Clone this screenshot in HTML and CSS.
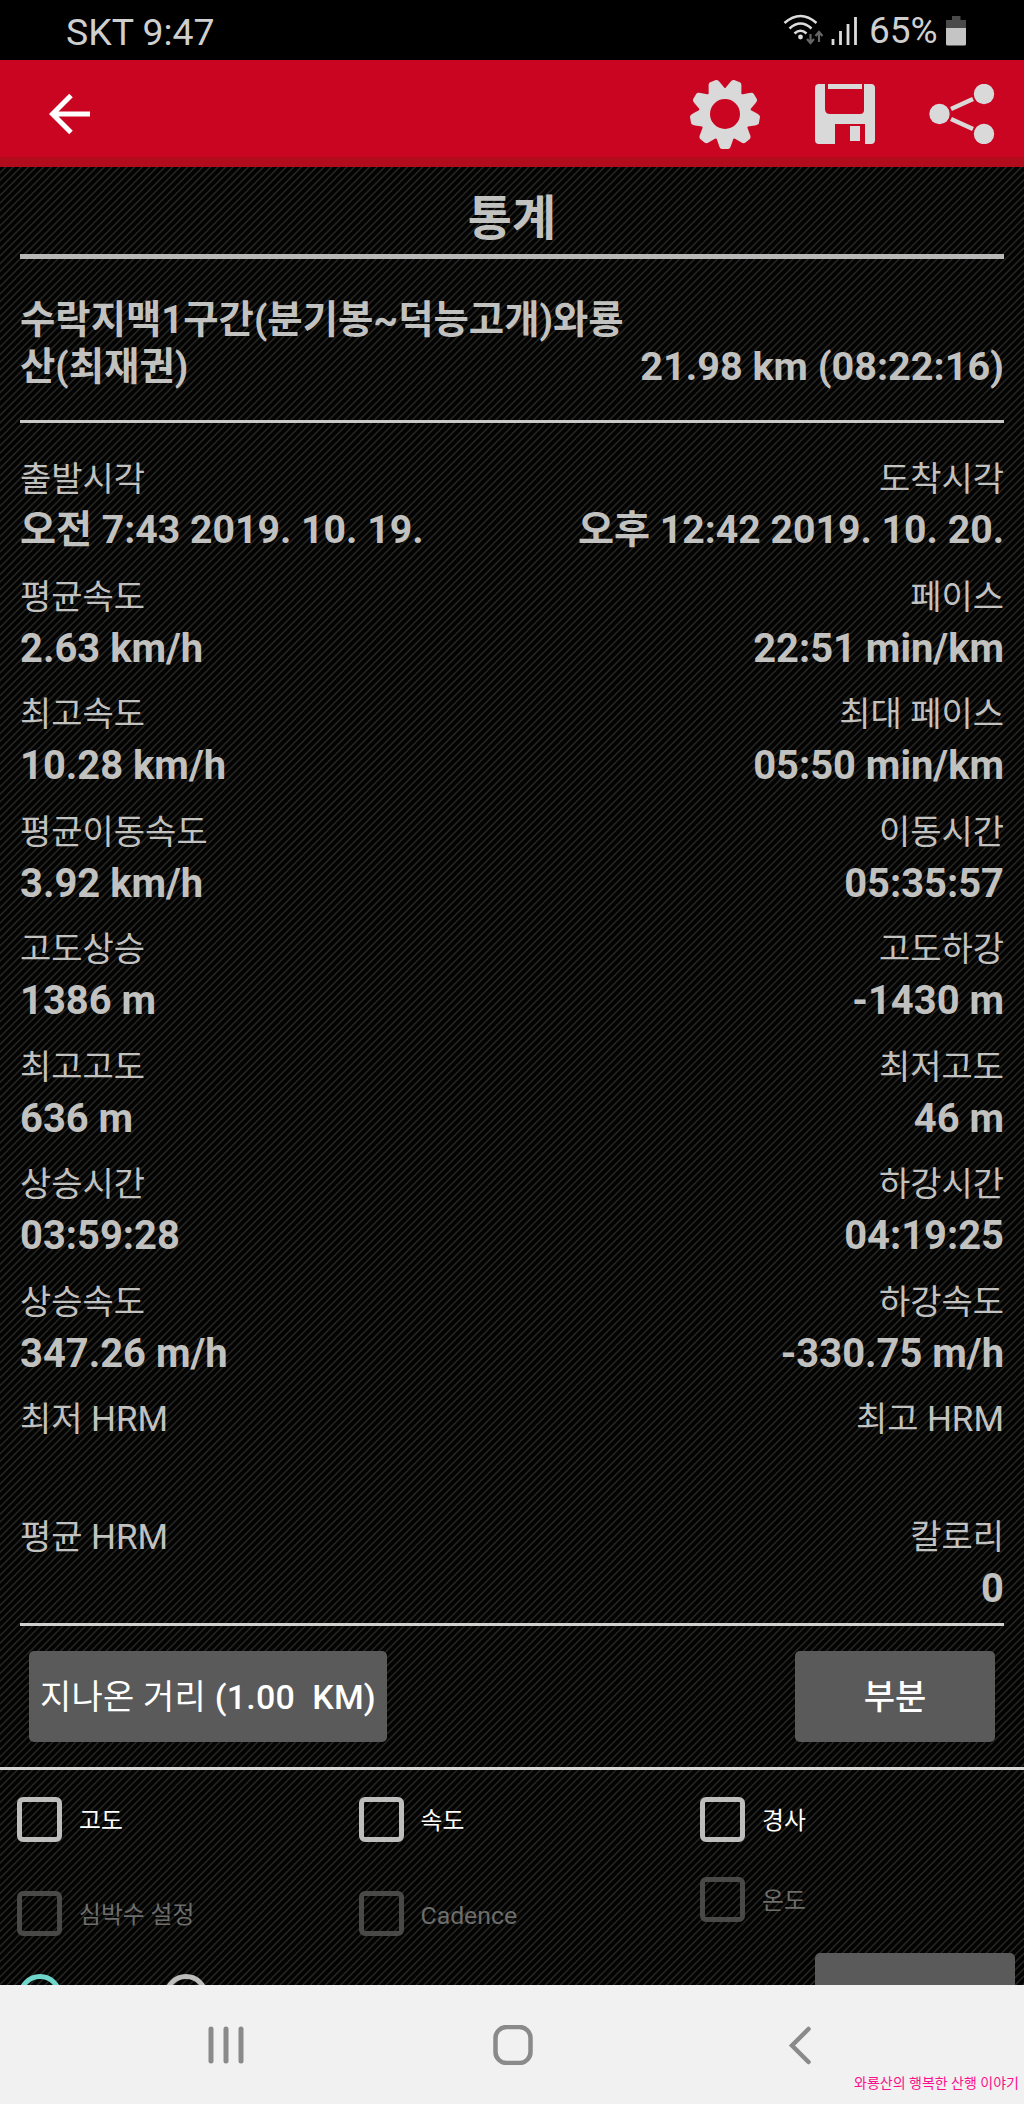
FILE: index.html
```html
<!DOCTYPE html>
<html lang="ko">

<head>
    <meta charset="utf-8">
    <title>통계</title>
    <link rel="stylesheet" href="styles.css">
</head>

<body>
    <div id="status">
        <span>SKT 9:47</span>
        <div class="right">
            <svg width="76" height="36" viewBox="782 12 76 36">
                <g fill="none" stroke="#dcdcdc" stroke-width="2.6">
                    <path d="M783.5 23 Q799.5 9 815.500 23" />
                    <path d="M788.5 28.500 Q799.500 18.500 810.500 28.500" />
                    <path d="M793.500 33.500 Q799.500 28 805.500 33.500" />
                </g>
                <circle cx="799.5" cy="37" r="2.400" fill="#dcdcdc" />
                <path d="M809.500 34v8.500M806 39l3.500 4 3.500-4M818 42v-9M814.500 36l3.500-4 3.500 4" fill="none" stroke="#666" stroke-width="2.200" />
                <path d="M832 45v-6M839.500 45V31M847 45V24M854.500 45V17" stroke="#dcdcdc" stroke-width="2.800" />
            </svg>
            <span class="pct">65%</span>
            <svg width="20" height="31" viewBox="0 0 20 31">
                <path d="M6 1h8.500v4H20v8H0V5h6z" fill="#4a4a4a" />
                <path d="M0 13h20v16q0 1.500-1.500 1.500h-17Q0 30.500 0 29z" fill="#c4c4c4" />
            </svg>
        </div>
    </div>

    <div id="header">
        <svg class="back" width="42" height="42" viewBox="0 0 42 42">
            <path d="M41 21H4M22 2.500L3.500 21 22 39.500" fill="none" stroke="#fff" stroke-width="5" />
        </svg>
        <div class="tools">
            <svg width="70" height="70" viewBox="-35 -35 70 70">
                <defs>
                    <path id="tooth" d="M-9 23L-6 31.500Q-5 35-3 35H3Q5 35 6 31.500L9 23z" />
                </defs>
                <g fill="#d9d9d9">
                    <use href="#tooth" />
                    <use href="#tooth" transform="rotate(40)" />
                    <use href="#tooth" transform="rotate(80)" />
                    <use href="#tooth" transform="rotate(120)" />
                    <use href="#tooth" transform="rotate(160)" />
                    <use href="#tooth" transform="rotate(200)" />
                    <use href="#tooth" transform="rotate(240)" />
                    <use href="#tooth" transform="rotate(280)" />
                    <use href="#tooth" transform="rotate(320)" />
                </g>
                <circle r="20.500" fill="none" stroke="#d9d9d9" stroke-width="11" />
            </svg>
            <svg class="save" width="60" height="60" viewBox="0 0 60 60">
                <path fill="#d9d9d9" d="M4 0H10V25Q10 30 15 30H45Q49 30 49 26V0H56Q60 0 60 4V56Q60 60 56 60H50V40H20V60H4Q0 60 0 56V4Q0 0 4 0zM13 0H47V5H13zM35 42H45V57H35z" />
            </svg>
            <svg width="66" height="60" viewBox="0 0 66 60">
                <path d="M22 25L44 15M22 35L44 45" stroke="#d9d9d9" stroke-width="4.500" />
                <g fill="#d9d9d9">
                    <circle cx="10.500" cy="30" r="10.200" />
                    <circle cx="55" cy="10" r="10.200" />
                    <circle cx="55" cy="50" r="10.200" />
                </g>
            </svg>
        </div>
    </div>

    <div id="content">
        <div class="stats">
            <h1>통계</h1>
            <div class="track">
                <div class="name">수락지맥1구간(분기봉~덕능고개)와룡<br>산(최재권)</div>
                <div class="total">21.98 km (08:22:16)</div>
            </div>
            <table>
                <tr class="label"><td>출발시각</td><td>도착시각</td></tr>
                <tr class="value date"><td>오전 7:43 2019. 10. 19.</td><td>오후 12:42 2019. 10. 20.</td></tr>
                <tr class="label"><td>평균속도</td><td>페이스</td></tr>
                <tr class="value"><td>2.63 km/h</td><td>22:51 min/km</td></tr>
                <tr class="label"><td>최고속도</td><td>최대 페이스</td></tr>
                <tr class="value"><td>10.28 km/h</td><td>05:50 min/km</td></tr>
                <tr class="label"><td>평균이동속도</td><td>이동시간</td></tr>
                <tr class="value"><td>3.92 km/h</td><td>05:35:57</td></tr>
                <tr class="label"><td>고도상승</td><td>고도하강</td></tr>
                <tr class="value"><td>1386 m</td><td>-1430 m</td></tr>
                <tr class="label"><td>최고고도</td><td>최저고도</td></tr>
                <tr class="value"><td>636 m</td><td>46 m</td></tr>
                <tr class="label"><td>상승시간</td><td>하강시간</td></tr>
                <tr class="value"><td>03:59:28</td><td>04:19:25</td></tr>
                <tr class="label"><td>상승속도</td><td>하강속도</td></tr>
                <tr class="value"><td>347.26 m/h</td><td>-330.75 m/h</td></tr>
                <tr class="label"><td>최저 <span>HRM</span></td><td>최고 <span>HRM</span></td></tr>
                <tr class="value"><td></td><td></td></tr>
                <tr class="label"><td>평균 <span>HRM</span></td><td>칼로리</td></tr>
                <tr class="value"><td></td><td>0</td></tr>
            </table>
        </div>

        <div class="buttons">
            <div class="btn distance"><span>지나온 거리</span> (1.00&nbsp; KM)</div>
            <div class="btn">부분</div>
        </div>

        <div class="checks">
            <div class="check"><i></i>고도</div>
            <div class="check"><i></i>속도</div>
            <div class="check"><i></i>경사</div>
            <div class="check off"><i></i>심박수 설정</div>
            <div class="check off"><i></i><span>Cadence</span></div>
            <div class="check off up"><i></i>온도</div>
        </div>

        <div class="bottom">
            <i class="radio on"></i>
            <i class="radio"></i>
            <div class="btn"></div>
        </div>
    </div>

    <div id="nav">
        <svg width="36" height="40" viewBox="0 0 36 40">
            <path d="M3 4v32M18 4v32M33 4v32" stroke="#8a8a8a" stroke-width="5" stroke-linecap="round" />
        </svg>
        <svg class="home" width="40" height="40" viewBox="0 0 40 40">
            <rect x="2.500" y="2" width="35" height="36" rx="11" fill="none" stroke="#8a8a8a" stroke-width="4.500" />
        </svg>
        <svg width="24" height="40" viewBox="0 0 24 40">
            <path d="M20.500 4L4 20.500 20.500 37" fill="none" stroke="#8a8a8a" stroke-width="4.500" stroke-linecap="round" />
        </svg>
        <span class="mark">와룡산의 행복한 산행 이야기</span>
    </div>
</body>

</html>
```
FILE: styles.css
```css
body {
    margin: 0;
    width: 1024px;
    height: 2104px;
    overflow: hidden;
    background-color: #000;
    color: #c1c1c0;
    font-family: Roboto, "Noto Sans CJK KR", sans-serif;
}

svg {
    display: block;
}

#status {
    display: flex;
    justify-content: space-between;
    height: 60px;
    box-sizing: border-box;
    padding: 0 58px 0 66px;
    font-size: 37.4px;
    line-height: 65px;
    color: #cfcfcf;
}

#status .right {
    display: flex;
    align-items: center;
}

#status .pct {
    width: 77px;
    margin-left: 10px;
    font-size: 37px;
}

#header {
    display: flex;
    align-items: center;
    justify-content: space-between;
    height: 107px;
    box-sizing: border-box;
    padding: 0 29px 0 49px;
    background-color: #c90521;
    border-bottom: 10px solid #b10b1c;
}

#header svg {
    position: relative;
    top: 5px;
}

.tools {
    display: flex;
    align-items: center;
}

.tools .save {
    margin: 0 54px 0 55px;
}

#content {
    height: 1818px;
    overflow: hidden;
    background: repeating-linear-gradient(135deg, #020302 0, #020302 2.8px, #252622 3.8px, #252622 4.4px, #020302 5.36px);
}

.stats {
    height: 1456px;
    margin: 0 20px;
    border-bottom: 3px solid #d0d0d0;
}

h1 {
    height: 87px;
    margin: 0;
    border-bottom: 5px solid #b8b8b8;
    font-size: 48px;
    line-height: 104px;
    text-align: center;
}

.track {
    display: flex;
    align-items: flex-end;
    justify-content: space-between;
    height: 164px;
    box-sizing: border-box;
    padding-bottom: 30px;
    border-bottom: 3px solid #c8c8c8;
    font-size: 38.4px;
    font-weight: bold;
    line-height: 47px;
    white-space: nowrap;
}

.track .total {
    margin-left: -100px;
    font-size: 39.6px;
}

table {
    width: 100%;
    margin-top: 31px;
    border-collapse: collapse;
}

td {
    padding: 0;
    white-space: nowrap;
}

td + td {
    text-align: right;
}

.label td {
    height: 51px;
    font-size: 34px;
    line-height: 51px;
}

.label span {
    font-size: 35px;
}

.value td {
    height: 66.5px;
    font-size: 39.9px;
    font-weight: bold;
    line-height: 51px;
    vertical-align: top;
}

.date td {
    font-size: 39.2px;
}

.buttons {
    display: flex;
    justify-content: space-between;
    height: 141px;
    box-sizing: border-box;
    padding: 25px 29px 0;
}

.btn {
    width: 200px;
    height: 91px;
    border-radius: 5px;
    background-color: #5a5a5b;
    color: #fff;
    font-size: 34px;
    font-weight: 500;
    line-height: 93px;
    text-align: center;
}

.btn.distance {
    width: 358px;
    letter-spacing: 0.2px;
}

.btn span {
    font-weight: 400;
}

.checks {
    display: grid;
    grid-template-columns: 341.5px 341.5px 341px;
    grid-template-rows: 94px 94px;
    height: 186px;
    box-sizing: border-box;
    padding-top: 27px;
    border-top: 3px solid #d6d6d6;
}

.check {
    display: flex;
    height: 45px;
    padding-left: 17px;
    color: #fff;
    font-size: 23.8px;
    line-height: 49px;
}

.check i {
    width: 35px;
    height: 35px;
    margin-right: 17px;
    border: 5px solid #bdbdbd;
    border-radius: 6px;
}

.check span {
    font-size: 24.8px;
}

.off {
    color: #6d6d6b;
}

.off i {
    border-color: #494a47;
}

.up {
    margin-top: -14px;
}

.bottom {
    display: flex;
    padding: 0 9px 0 18px;
}

.radio {
    width: 34px;
    height: 34px;
    margin: 21px 102px 0 0;
    border: 5px solid #bdbdbd;
    border-radius: 50%;
}

.radio.on {
    border-color: #70d6ca;
}

.bottom .btn {
    margin-left: auto;
}

#nav {
    position: relative;
    display: flex;
    align-items: center;
    justify-content: space-between;
    height: 119px;
    box-sizing: border-box;
    padding: 0 212px 0 208px;
    background-color: #f1f1f1;
}

.home {
    margin-right: 6px;
}

.mark {
    position: absolute;
    right: 5px;
    bottom: 11px;
    color: #fb0f8c;
    font-size: 14px;
    line-height: 20px;
}
```
